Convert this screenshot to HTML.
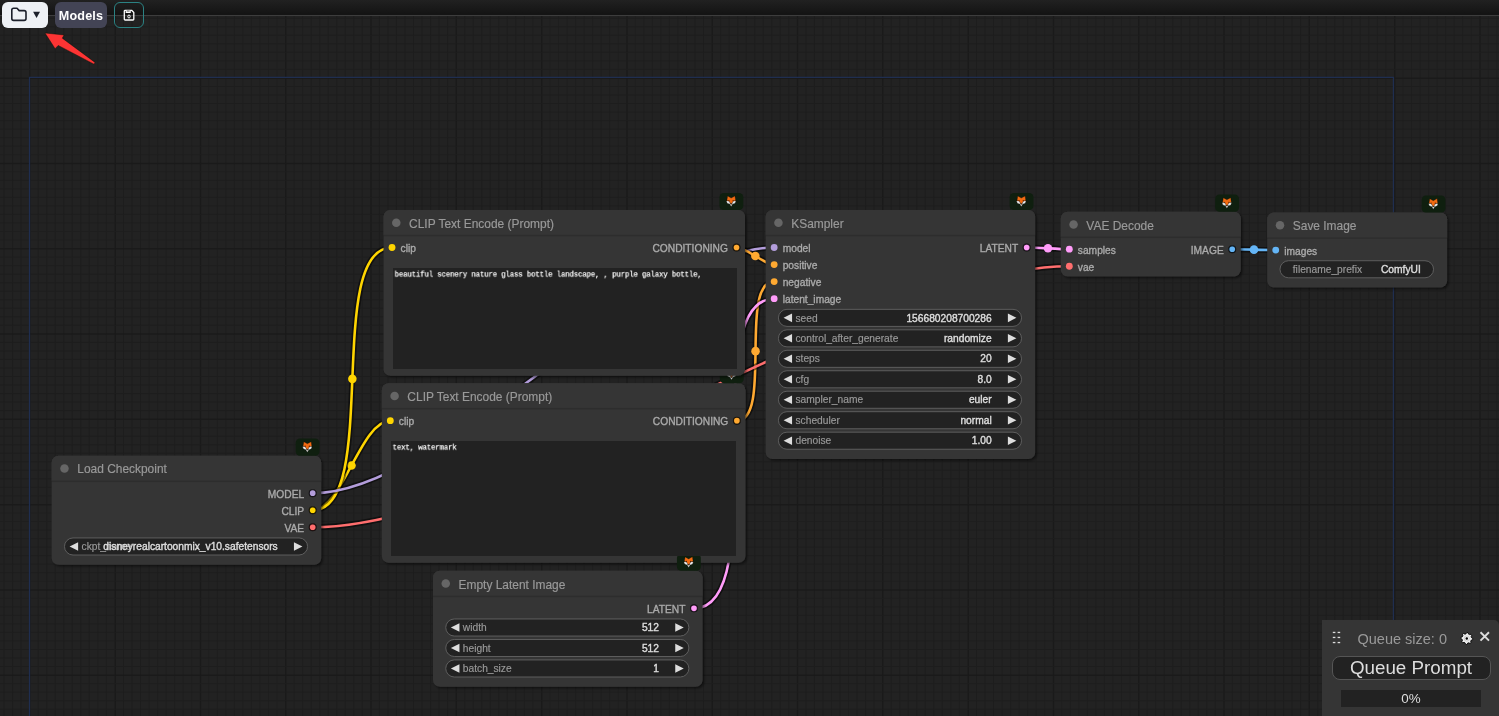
<!DOCTYPE html><html><head><meta charset="utf-8"><style>
*{margin:0;padding:0;box-sizing:border-box}
html,body{width:1499px;height:716px;overflow:hidden;background:#222;font-family:"Liberation Sans",sans-serif}
#cv{position:absolute;left:0;top:0;will-change:transform}
.tt{font-family:"Liberation Sans",sans-serif;font-size:14px;fill:#999;stroke:#999;stroke-width:0.2}
.sl{font-family:"Liberation Sans",sans-serif;font-size:12px;fill:#AAA;stroke:#AAA;stroke-width:0.4}
.wl{font-family:"Liberation Sans",sans-serif;font-size:12px;fill:#999;stroke:#999;stroke-width:0.2}
.wv{font-family:"Liberation Sans",sans-serif;font-size:12px;fill:#DDD;stroke:#DDD;stroke-width:0.45}
.ta{will-change:transform;position:absolute;transform-origin:0 0;transform:scale(0.853);background:#222;color:#ddd;padding:2px;overflow:hidden}
.tx{font-family:"Liberation Mono",monospace;font-size:8.8px;line-height:12px;padding-top:0.32px;color:#fff;white-space:pre-wrap;transform:scaleX(0.947);transform-origin:0 0;width:105.6%;-webkit-text-stroke:0.25px #fff}
#topbar{position:absolute;left:0;top:0;width:1499px;height:16px;background:linear-gradient(#212121,#141414 90%);border-bottom:1px solid #0c0c0c}
#topline{position:absolute;left:0;top:15px;width:1499px;height:1px;background:#3d3d3d}
.btn{position:absolute;top:2px;height:26px;border-radius:6px}
#bfold{left:2px;width:46px;background:#eef1f5}
#bmod{will-change:transform;left:55px;width:52px;background:#434455;color:#fff;font-weight:bold;font-size:12.6px;letter-spacing:0.15px;line-height:28px;text-align:center}
#bsave{left:114px;width:30px;border:1.3px solid #2b8283;background:transparent}
#qp{will-change:transform;position:absolute;left:1322px;top:620px;width:177px;height:96px;background:#353535;border-top-right-radius:5px}
#qs{position:absolute;left:35.5px;top:11px;font-size:14.5px;color:#999}
#qbtn{position:absolute;left:9.5px;top:35.5px;width:159px;height:24.5px;border:1px solid #555;border-radius:8px;background:#222;color:#ddd;font-size:18.8px;text-align:center;line-height:21px}
#qbar{position:absolute;left:19px;top:70px;width:140px;height:17px;background:#222;color:#ddd;font-size:13.4px;text-align:center;line-height:17px}
</style></head><body><svg id="cv" width="1499" height="716" viewBox="0 0 1499 716"><defs><filter id="sh" x="-10%" y="-10%" width="120%" height="130%"><feDropShadow dx="2" dy="2" stdDeviation="1.5" flood-color="#000" flood-opacity="0.5"/></filter></defs><rect width="1499" height="716" fill="#222"/><rect x="3.61" y="0" width="0.9" height="716" fill="#1e1e1e"/><rect x="12.14" y="0" width="0.9" height="716" fill="#1e1e1e"/><rect x="20.67" y="0" width="0.9" height="716" fill="#1e1e1e"/><rect x="29.20" y="0" width="1.3" height="716" fill="#1a1a1a"/><rect x="37.73" y="0" width="0.9" height="716" fill="#1e1e1e"/><rect x="46.26" y="0" width="0.9" height="716" fill="#1e1e1e"/><rect x="54.79" y="0" width="0.9" height="716" fill="#1e1e1e"/><rect x="63.32" y="0" width="0.9" height="716" fill="#1e1e1e"/><rect x="71.85" y="0" width="0.9" height="716" fill="#1e1e1e"/><rect x="80.38" y="0" width="0.9" height="716" fill="#1e1e1e"/><rect x="88.91" y="0" width="0.9" height="716" fill="#1e1e1e"/><rect x="97.44" y="0" width="0.9" height="716" fill="#1e1e1e"/><rect x="105.97" y="0" width="0.9" height="716" fill="#1e1e1e"/><rect x="114.50" y="0" width="1.3" height="716" fill="#1a1a1a"/><rect x="123.03" y="0" width="0.9" height="716" fill="#1e1e1e"/><rect x="131.56" y="0" width="0.9" height="716" fill="#1e1e1e"/><rect x="140.09" y="0" width="0.9" height="716" fill="#1e1e1e"/><rect x="148.62" y="0" width="0.9" height="716" fill="#1e1e1e"/><rect x="157.15" y="0" width="0.9" height="716" fill="#1e1e1e"/><rect x="165.68" y="0" width="0.9" height="716" fill="#1e1e1e"/><rect x="174.21" y="0" width="0.9" height="716" fill="#1e1e1e"/><rect x="182.74" y="0" width="0.9" height="716" fill="#1e1e1e"/><rect x="191.27" y="0" width="0.9" height="716" fill="#1e1e1e"/><rect x="199.80" y="0" width="1.3" height="716" fill="#1a1a1a"/><rect x="208.33" y="0" width="0.9" height="716" fill="#1e1e1e"/><rect x="216.86" y="0" width="0.9" height="716" fill="#1e1e1e"/><rect x="225.39" y="0" width="0.9" height="716" fill="#1e1e1e"/><rect x="233.92" y="0" width="0.9" height="716" fill="#1e1e1e"/><rect x="242.45" y="0" width="0.9" height="716" fill="#1e1e1e"/><rect x="250.98" y="0" width="0.9" height="716" fill="#1e1e1e"/><rect x="259.51" y="0" width="0.9" height="716" fill="#1e1e1e"/><rect x="268.04" y="0" width="0.9" height="716" fill="#1e1e1e"/><rect x="276.57" y="0" width="0.9" height="716" fill="#1e1e1e"/><rect x="285.10" y="0" width="1.3" height="716" fill="#1a1a1a"/><rect x="293.63" y="0" width="0.9" height="716" fill="#1e1e1e"/><rect x="302.16" y="0" width="0.9" height="716" fill="#1e1e1e"/><rect x="310.69" y="0" width="0.9" height="716" fill="#1e1e1e"/><rect x="319.22" y="0" width="0.9" height="716" fill="#1e1e1e"/><rect x="327.75" y="0" width="0.9" height="716" fill="#1e1e1e"/><rect x="336.28" y="0" width="0.9" height="716" fill="#1e1e1e"/><rect x="344.81" y="0" width="0.9" height="716" fill="#1e1e1e"/><rect x="353.34" y="0" width="0.9" height="716" fill="#1e1e1e"/><rect x="361.87" y="0" width="0.9" height="716" fill="#1e1e1e"/><rect x="370.40" y="0" width="1.3" height="716" fill="#1a1a1a"/><rect x="378.93" y="0" width="0.9" height="716" fill="#1e1e1e"/><rect x="387.46" y="0" width="0.9" height="716" fill="#1e1e1e"/><rect x="395.99" y="0" width="0.9" height="716" fill="#1e1e1e"/><rect x="404.52" y="0" width="0.9" height="716" fill="#1e1e1e"/><rect x="413.05" y="0" width="0.9" height="716" fill="#1e1e1e"/><rect x="421.58" y="0" width="0.9" height="716" fill="#1e1e1e"/><rect x="430.11" y="0" width="0.9" height="716" fill="#1e1e1e"/><rect x="438.64" y="0" width="0.9" height="716" fill="#1e1e1e"/><rect x="447.17" y="0" width="0.9" height="716" fill="#1e1e1e"/><rect x="455.70" y="0" width="1.3" height="716" fill="#1a1a1a"/><rect x="464.23" y="0" width="0.9" height="716" fill="#1e1e1e"/><rect x="472.76" y="0" width="0.9" height="716" fill="#1e1e1e"/><rect x="481.29" y="0" width="0.9" height="716" fill="#1e1e1e"/><rect x="489.82" y="0" width="0.9" height="716" fill="#1e1e1e"/><rect x="498.35" y="0" width="0.9" height="716" fill="#1e1e1e"/><rect x="506.88" y="0" width="0.9" height="716" fill="#1e1e1e"/><rect x="515.41" y="0" width="0.9" height="716" fill="#1e1e1e"/><rect x="523.94" y="0" width="0.9" height="716" fill="#1e1e1e"/><rect x="532.47" y="0" width="0.9" height="716" fill="#1e1e1e"/><rect x="541.00" y="0" width="1.3" height="716" fill="#1a1a1a"/><rect x="549.53" y="0" width="0.9" height="716" fill="#1e1e1e"/><rect x="558.06" y="0" width="0.9" height="716" fill="#1e1e1e"/><rect x="566.59" y="0" width="0.9" height="716" fill="#1e1e1e"/><rect x="575.12" y="0" width="0.9" height="716" fill="#1e1e1e"/><rect x="583.65" y="0" width="0.9" height="716" fill="#1e1e1e"/><rect x="592.18" y="0" width="0.9" height="716" fill="#1e1e1e"/><rect x="600.71" y="0" width="0.9" height="716" fill="#1e1e1e"/><rect x="609.24" y="0" width="0.9" height="716" fill="#1e1e1e"/><rect x="617.77" y="0" width="0.9" height="716" fill="#1e1e1e"/><rect x="626.30" y="0" width="1.3" height="716" fill="#1a1a1a"/><rect x="634.83" y="0" width="0.9" height="716" fill="#1e1e1e"/><rect x="643.36" y="0" width="0.9" height="716" fill="#1e1e1e"/><rect x="651.89" y="0" width="0.9" height="716" fill="#1e1e1e"/><rect x="660.42" y="0" width="0.9" height="716" fill="#1e1e1e"/><rect x="668.95" y="0" width="0.9" height="716" fill="#1e1e1e"/><rect x="677.48" y="0" width="0.9" height="716" fill="#1e1e1e"/><rect x="686.01" y="0" width="0.9" height="716" fill="#1e1e1e"/><rect x="694.54" y="0" width="0.9" height="716" fill="#1e1e1e"/><rect x="703.07" y="0" width="0.9" height="716" fill="#1e1e1e"/><rect x="711.60" y="0" width="1.3" height="716" fill="#1a1a1a"/><rect x="720.13" y="0" width="0.9" height="716" fill="#1e1e1e"/><rect x="728.66" y="0" width="0.9" height="716" fill="#1e1e1e"/><rect x="737.19" y="0" width="0.9" height="716" fill="#1e1e1e"/><rect x="745.72" y="0" width="0.9" height="716" fill="#1e1e1e"/><rect x="754.25" y="0" width="0.9" height="716" fill="#1e1e1e"/><rect x="762.78" y="0" width="0.9" height="716" fill="#1e1e1e"/><rect x="771.31" y="0" width="0.9" height="716" fill="#1e1e1e"/><rect x="779.84" y="0" width="0.9" height="716" fill="#1e1e1e"/><rect x="788.37" y="0" width="0.9" height="716" fill="#1e1e1e"/><rect x="796.90" y="0" width="1.3" height="716" fill="#1a1a1a"/><rect x="805.43" y="0" width="0.9" height="716" fill="#1e1e1e"/><rect x="813.96" y="0" width="0.9" height="716" fill="#1e1e1e"/><rect x="822.49" y="0" width="0.9" height="716" fill="#1e1e1e"/><rect x="831.02" y="0" width="0.9" height="716" fill="#1e1e1e"/><rect x="839.55" y="0" width="0.9" height="716" fill="#1e1e1e"/><rect x="848.08" y="0" width="0.9" height="716" fill="#1e1e1e"/><rect x="856.61" y="0" width="0.9" height="716" fill="#1e1e1e"/><rect x="865.14" y="0" width="0.9" height="716" fill="#1e1e1e"/><rect x="873.67" y="0" width="0.9" height="716" fill="#1e1e1e"/><rect x="882.20" y="0" width="1.3" height="716" fill="#1a1a1a"/><rect x="890.73" y="0" width="0.9" height="716" fill="#1e1e1e"/><rect x="899.26" y="0" width="0.9" height="716" fill="#1e1e1e"/><rect x="907.79" y="0" width="0.9" height="716" fill="#1e1e1e"/><rect x="916.32" y="0" width="0.9" height="716" fill="#1e1e1e"/><rect x="924.85" y="0" width="0.9" height="716" fill="#1e1e1e"/><rect x="933.38" y="0" width="0.9" height="716" fill="#1e1e1e"/><rect x="941.91" y="0" width="0.9" height="716" fill="#1e1e1e"/><rect x="950.44" y="0" width="0.9" height="716" fill="#1e1e1e"/><rect x="958.97" y="0" width="0.9" height="716" fill="#1e1e1e"/><rect x="967.50" y="0" width="1.3" height="716" fill="#1a1a1a"/><rect x="976.03" y="0" width="0.9" height="716" fill="#1e1e1e"/><rect x="984.56" y="0" width="0.9" height="716" fill="#1e1e1e"/><rect x="993.09" y="0" width="0.9" height="716" fill="#1e1e1e"/><rect x="1001.62" y="0" width="0.9" height="716" fill="#1e1e1e"/><rect x="1010.15" y="0" width="0.9" height="716" fill="#1e1e1e"/><rect x="1018.68" y="0" width="0.9" height="716" fill="#1e1e1e"/><rect x="1027.21" y="0" width="0.9" height="716" fill="#1e1e1e"/><rect x="1035.74" y="0" width="0.9" height="716" fill="#1e1e1e"/><rect x="1044.27" y="0" width="0.9" height="716" fill="#1e1e1e"/><rect x="1052.80" y="0" width="1.3" height="716" fill="#1a1a1a"/><rect x="1061.33" y="0" width="0.9" height="716" fill="#1e1e1e"/><rect x="1069.86" y="0" width="0.9" height="716" fill="#1e1e1e"/><rect x="1078.39" y="0" width="0.9" height="716" fill="#1e1e1e"/><rect x="1086.92" y="0" width="0.9" height="716" fill="#1e1e1e"/><rect x="1095.45" y="0" width="0.9" height="716" fill="#1e1e1e"/><rect x="1103.98" y="0" width="0.9" height="716" fill="#1e1e1e"/><rect x="1112.51" y="0" width="0.9" height="716" fill="#1e1e1e"/><rect x="1121.04" y="0" width="0.9" height="716" fill="#1e1e1e"/><rect x="1129.57" y="0" width="0.9" height="716" fill="#1e1e1e"/><rect x="1138.10" y="0" width="1.3" height="716" fill="#1a1a1a"/><rect x="1146.63" y="0" width="0.9" height="716" fill="#1e1e1e"/><rect x="1155.16" y="0" width="0.9" height="716" fill="#1e1e1e"/><rect x="1163.69" y="0" width="0.9" height="716" fill="#1e1e1e"/><rect x="1172.22" y="0" width="0.9" height="716" fill="#1e1e1e"/><rect x="1180.75" y="0" width="0.9" height="716" fill="#1e1e1e"/><rect x="1189.28" y="0" width="0.9" height="716" fill="#1e1e1e"/><rect x="1197.81" y="0" width="0.9" height="716" fill="#1e1e1e"/><rect x="1206.34" y="0" width="0.9" height="716" fill="#1e1e1e"/><rect x="1214.87" y="0" width="0.9" height="716" fill="#1e1e1e"/><rect x="1223.40" y="0" width="1.3" height="716" fill="#1a1a1a"/><rect x="1231.93" y="0" width="0.9" height="716" fill="#1e1e1e"/><rect x="1240.46" y="0" width="0.9" height="716" fill="#1e1e1e"/><rect x="1248.99" y="0" width="0.9" height="716" fill="#1e1e1e"/><rect x="1257.52" y="0" width="0.9" height="716" fill="#1e1e1e"/><rect x="1266.05" y="0" width="0.9" height="716" fill="#1e1e1e"/><rect x="1274.58" y="0" width="0.9" height="716" fill="#1e1e1e"/><rect x="1283.11" y="0" width="0.9" height="716" fill="#1e1e1e"/><rect x="1291.64" y="0" width="0.9" height="716" fill="#1e1e1e"/><rect x="1300.17" y="0" width="0.9" height="716" fill="#1e1e1e"/><rect x="1308.70" y="0" width="1.3" height="716" fill="#1a1a1a"/><rect x="1317.23" y="0" width="0.9" height="716" fill="#1e1e1e"/><rect x="1325.76" y="0" width="0.9" height="716" fill="#1e1e1e"/><rect x="1334.29" y="0" width="0.9" height="716" fill="#1e1e1e"/><rect x="1342.82" y="0" width="0.9" height="716" fill="#1e1e1e"/><rect x="1351.35" y="0" width="0.9" height="716" fill="#1e1e1e"/><rect x="1359.88" y="0" width="0.9" height="716" fill="#1e1e1e"/><rect x="1368.41" y="0" width="0.9" height="716" fill="#1e1e1e"/><rect x="1376.94" y="0" width="0.9" height="716" fill="#1e1e1e"/><rect x="1385.47" y="0" width="0.9" height="716" fill="#1e1e1e"/><rect x="1394.00" y="0" width="1.3" height="716" fill="#1a1a1a"/><rect x="1402.53" y="0" width="0.9" height="716" fill="#1e1e1e"/><rect x="1411.06" y="0" width="0.9" height="716" fill="#1e1e1e"/><rect x="1419.59" y="0" width="0.9" height="716" fill="#1e1e1e"/><rect x="1428.12" y="0" width="0.9" height="716" fill="#1e1e1e"/><rect x="1436.65" y="0" width="0.9" height="716" fill="#1e1e1e"/><rect x="1445.18" y="0" width="0.9" height="716" fill="#1e1e1e"/><rect x="1453.71" y="0" width="0.9" height="716" fill="#1e1e1e"/><rect x="1462.24" y="0" width="0.9" height="716" fill="#1e1e1e"/><rect x="1470.77" y="0" width="0.9" height="716" fill="#1e1e1e"/><rect x="1479.30" y="0" width="1.3" height="716" fill="#1a1a1a"/><rect x="1487.83" y="0" width="0.9" height="716" fill="#1e1e1e"/><rect x="1496.36" y="0" width="0.9" height="716" fill="#1e1e1e"/><rect x="0" y="0.73" width="1499" height="0.9" fill="#1e1e1e"/><rect x="0" y="9.26" width="1499" height="0.9" fill="#1e1e1e"/><rect x="0" y="17.79" width="1499" height="0.9" fill="#1e1e1e"/><rect x="0" y="26.32" width="1499" height="0.9" fill="#1e1e1e"/><rect x="0" y="34.85" width="1499" height="0.9" fill="#1e1e1e"/><rect x="0" y="43.38" width="1499" height="0.9" fill="#1e1e1e"/><rect x="0" y="51.91" width="1499" height="0.9" fill="#1e1e1e"/><rect x="0" y="60.44" width="1499" height="0.9" fill="#1e1e1e"/><rect x="0" y="68.97" width="1499" height="0.9" fill="#1e1e1e"/><rect x="0" y="77.50" width="1499" height="1.3" fill="#1a1a1a"/><rect x="0" y="86.03" width="1499" height="0.9" fill="#1e1e1e"/><rect x="0" y="94.56" width="1499" height="0.9" fill="#1e1e1e"/><rect x="0" y="103.09" width="1499" height="0.9" fill="#1e1e1e"/><rect x="0" y="111.62" width="1499" height="0.9" fill="#1e1e1e"/><rect x="0" y="120.15" width="1499" height="0.9" fill="#1e1e1e"/><rect x="0" y="128.68" width="1499" height="0.9" fill="#1e1e1e"/><rect x="0" y="137.21" width="1499" height="0.9" fill="#1e1e1e"/><rect x="0" y="145.74" width="1499" height="0.9" fill="#1e1e1e"/><rect x="0" y="154.27" width="1499" height="0.9" fill="#1e1e1e"/><rect x="0" y="162.80" width="1499" height="1.3" fill="#1a1a1a"/><rect x="0" y="171.33" width="1499" height="0.9" fill="#1e1e1e"/><rect x="0" y="179.86" width="1499" height="0.9" fill="#1e1e1e"/><rect x="0" y="188.39" width="1499" height="0.9" fill="#1e1e1e"/><rect x="0" y="196.92" width="1499" height="0.9" fill="#1e1e1e"/><rect x="0" y="205.45" width="1499" height="0.9" fill="#1e1e1e"/><rect x="0" y="213.98" width="1499" height="0.9" fill="#1e1e1e"/><rect x="0" y="222.51" width="1499" height="0.9" fill="#1e1e1e"/><rect x="0" y="231.04" width="1499" height="0.9" fill="#1e1e1e"/><rect x="0" y="239.57" width="1499" height="0.9" fill="#1e1e1e"/><rect x="0" y="248.10" width="1499" height="1.3" fill="#1a1a1a"/><rect x="0" y="256.63" width="1499" height="0.9" fill="#1e1e1e"/><rect x="0" y="265.16" width="1499" height="0.9" fill="#1e1e1e"/><rect x="0" y="273.69" width="1499" height="0.9" fill="#1e1e1e"/><rect x="0" y="282.22" width="1499" height="0.9" fill="#1e1e1e"/><rect x="0" y="290.75" width="1499" height="0.9" fill="#1e1e1e"/><rect x="0" y="299.28" width="1499" height="0.9" fill="#1e1e1e"/><rect x="0" y="307.81" width="1499" height="0.9" fill="#1e1e1e"/><rect x="0" y="316.34" width="1499" height="0.9" fill="#1e1e1e"/><rect x="0" y="324.87" width="1499" height="0.9" fill="#1e1e1e"/><rect x="0" y="333.40" width="1499" height="1.3" fill="#1a1a1a"/><rect x="0" y="341.93" width="1499" height="0.9" fill="#1e1e1e"/><rect x="0" y="350.46" width="1499" height="0.9" fill="#1e1e1e"/><rect x="0" y="358.99" width="1499" height="0.9" fill="#1e1e1e"/><rect x="0" y="367.52" width="1499" height="0.9" fill="#1e1e1e"/><rect x="0" y="376.05" width="1499" height="0.9" fill="#1e1e1e"/><rect x="0" y="384.58" width="1499" height="0.9" fill="#1e1e1e"/><rect x="0" y="393.11" width="1499" height="0.9" fill="#1e1e1e"/><rect x="0" y="401.64" width="1499" height="0.9" fill="#1e1e1e"/><rect x="0" y="410.17" width="1499" height="0.9" fill="#1e1e1e"/><rect x="0" y="418.70" width="1499" height="1.3" fill="#1a1a1a"/><rect x="0" y="427.23" width="1499" height="0.9" fill="#1e1e1e"/><rect x="0" y="435.76" width="1499" height="0.9" fill="#1e1e1e"/><rect x="0" y="444.29" width="1499" height="0.9" fill="#1e1e1e"/><rect x="0" y="452.82" width="1499" height="0.9" fill="#1e1e1e"/><rect x="0" y="461.35" width="1499" height="0.9" fill="#1e1e1e"/><rect x="0" y="469.88" width="1499" height="0.9" fill="#1e1e1e"/><rect x="0" y="478.41" width="1499" height="0.9" fill="#1e1e1e"/><rect x="0" y="486.94" width="1499" height="0.9" fill="#1e1e1e"/><rect x="0" y="495.47" width="1499" height="0.9" fill="#1e1e1e"/><rect x="0" y="504.00" width="1499" height="1.3" fill="#1a1a1a"/><rect x="0" y="512.53" width="1499" height="0.9" fill="#1e1e1e"/><rect x="0" y="521.06" width="1499" height="0.9" fill="#1e1e1e"/><rect x="0" y="529.59" width="1499" height="0.9" fill="#1e1e1e"/><rect x="0" y="538.12" width="1499" height="0.9" fill="#1e1e1e"/><rect x="0" y="546.65" width="1499" height="0.9" fill="#1e1e1e"/><rect x="0" y="555.18" width="1499" height="0.9" fill="#1e1e1e"/><rect x="0" y="563.71" width="1499" height="0.9" fill="#1e1e1e"/><rect x="0" y="572.24" width="1499" height="0.9" fill="#1e1e1e"/><rect x="0" y="580.77" width="1499" height="0.9" fill="#1e1e1e"/><rect x="0" y="589.30" width="1499" height="1.3" fill="#1a1a1a"/><rect x="0" y="597.83" width="1499" height="0.9" fill="#1e1e1e"/><rect x="0" y="606.36" width="1499" height="0.9" fill="#1e1e1e"/><rect x="0" y="614.89" width="1499" height="0.9" fill="#1e1e1e"/><rect x="0" y="623.42" width="1499" height="0.9" fill="#1e1e1e"/><rect x="0" y="631.95" width="1499" height="0.9" fill="#1e1e1e"/><rect x="0" y="640.48" width="1499" height="0.9" fill="#1e1e1e"/><rect x="0" y="649.01" width="1499" height="0.9" fill="#1e1e1e"/><rect x="0" y="657.54" width="1499" height="0.9" fill="#1e1e1e"/><rect x="0" y="666.07" width="1499" height="0.9" fill="#1e1e1e"/><rect x="0" y="674.60" width="1499" height="1.3" fill="#1a1a1a"/><rect x="0" y="683.13" width="1499" height="0.9" fill="#1e1e1e"/><rect x="0" y="691.66" width="1499" height="0.9" fill="#1e1e1e"/><rect x="0" y="700.19" width="1499" height="0.9" fill="#1e1e1e"/><rect x="0" y="708.72" width="1499" height="0.9" fill="#1e1e1e"/><path d="M29.5,716 V77.45 H1393.45 V716" fill="none" stroke="#1f2e50" stroke-width="1.25"/><g transform="translate(29.5,76.9) scale(0.853)"><path d="M332.00,508.00 C366.74,508.00 388.26,403.00 423.00,403.00" fill="none" stroke="rgba(0,0,0,0.5)" stroke-width="7" stroke-linecap="round"/><path d="M332.00,508.00 C366.74,508.00 388.26,403.00 423.00,403.00" fill="none" stroke="#FFD500" stroke-width="3"/><circle cx="377.50" cy="455.50" r="5" fill="#FFD500"/><path d="M332.00,508.00 C412.43,508.00 344.57,200.00 425.00,200.00" fill="none" stroke="rgba(0,0,0,0.5)" stroke-width="7" stroke-linecap="round"/><path d="M332.00,508.00 C412.43,508.00 344.57,200.00 425.00,200.00" fill="none" stroke="#FFD500" stroke-width="3"/><circle cx="378.50" cy="354.00" r="5" fill="#FFD500"/><path d="M332.00,488.00 C485.22,488.00 719.78,200.00 873.00,200.00" fill="none" stroke="rgba(0,0,0,0.5)" stroke-width="7" stroke-linecap="round"/><path d="M332.00,488.00 C485.22,488.00 719.78,200.00 873.00,200.00" fill="none" stroke="#B39DDB" stroke-width="3"/><circle cx="602.50" cy="344.00" r="5" fill="#B39DDB"/><path d="M828.85,200.00 C840.97,200.00 860.88,220.00 873.00,220.00" fill="none" stroke="rgba(0,0,0,0.5)" stroke-width="7" stroke-linecap="round"/><path d="M828.85,200.00 C840.97,200.00 860.88,220.00 873.00,220.00" fill="none" stroke="#FFA931" stroke-width="3"/><circle cx="850.92" cy="210.00" r="5" fill="#FFA931"/><path d="M829.28,403.00 C871.47,403.00 830.81,240.00 873.00,240.00" fill="none" stroke="rgba(0,0,0,0.5)" stroke-width="7" stroke-linecap="round"/><path d="M829.28,403.00 C871.47,403.00 830.81,240.00 873.00,240.00" fill="none" stroke="#FFA931" stroke-width="3"/><circle cx="851.14" cy="321.50" r="5" fill="#FFA931"/><path d="M779.00,623.00 C872.74,623.00 779.26,260.00 873.00,260.00" fill="none" stroke="rgba(0,0,0,0.5)" stroke-width="7" stroke-linecap="round"/><path d="M779.00,623.00 C872.74,623.00 779.26,260.00 873.00,260.00" fill="none" stroke="#FF9CF9" stroke-width="3"/><circle cx="826.00" cy="441.50" r="5" fill="#FF9CF9"/><path d="M1169.00,200.00 C1181.51,200.00 1206.49,202.00 1219.00,202.00" fill="none" stroke="rgba(0,0,0,0.5)" stroke-width="7" stroke-linecap="round"/><path d="M1169.00,200.00 C1181.51,200.00 1206.49,202.00 1219.00,202.00" fill="none" stroke="#FF9CF9" stroke-width="3"/><circle cx="1194.00" cy="201.00" r="5" fill="#FF9CF9"/><path d="M332.00,528.00 C566.57,528.00 984.43,222.00 1219.00,222.00" fill="none" stroke="rgba(0,0,0,0.5)" stroke-width="7" stroke-linecap="round"/><path d="M332.00,528.00 C566.57,528.00 984.43,222.00 1219.00,222.00" fill="none" stroke="#FF6E6E" stroke-width="3"/><circle cx="775.50" cy="375.00" r="5" fill="#FF6E6E"/><path d="M1410.00,202.00 C1422.75,202.00 1448.25,203.00 1461.00,203.00" fill="none" stroke="rgba(0,0,0,0.5)" stroke-width="7" stroke-linecap="round"/><path d="M1410.00,202.00 C1422.75,202.00 1448.25,203.00 1461.00,203.00" fill="none" stroke="#64B5F6" stroke-width="3"/><circle cx="1435.50" cy="202.50" r="5" fill="#64B5F6"/><g transform="translate(413,389)"><rect x="0" y="-30" width="426.28" height="210.61" rx="8" ry="8" fill="#353535" filter="url(#sh)"/><path d="M0,0 V-22 A8,8 0 0 1 8,-30 H418.28 A8,8 0 0 1 426.28,-22 V0 Z" fill="#353535"/><rect x="0" y="-1" width="426.28" height="2" fill="rgba(0,0,0,0.12)"/><circle cx="15" cy="-15" r="5" fill="#666"/><text x="30" y="-9.1" class="tt">CLIP Text Encode (Prompt)</text><circle cx="10" cy="14" r="4" fill="#FFD500"/><text x="20" y="19" class="sl" dy="0.5">clip</text><circle cx="416.28" cy="14" r="4" fill="#FFA931" stroke="#000" stroke-opacity="0.8" stroke-width="1.4"/><text x="406.28" y="19" class="sl" dy="0.5" text-anchor="end">CONDITIONING</text><g transform="translate(396.28,-50)"><rect x="0" y="0" width="28" height="20" rx="5" ry="5" fill="#0F1F0F"/><g transform="scale(1.1723)"><polygon points="8.2,3.2 11.7,5.2 15.5,3.1 16.2,7.8 14.2,8.1 11.7,11.4 9.2,8.1 7.4,7.8" fill="#F26B12" stroke="#000" stroke-width="0.35" stroke-opacity="0.7"/><polygon points="6.9,8.2 9.2,8.0 11.1,10.6 10.0,11.2 7.8,10.3" fill="#EDEDED" stroke="#000" stroke-width="0.3" stroke-opacity="0.6"/><polygon points="16.4,8.2 14.2,8.0 12.3,10.6 13.4,11.2 15.6,10.3" fill="#EDEDED" stroke="#000" stroke-width="0.3" stroke-opacity="0.6"/><polygon points="10.0,10.9 11.7,11.3 13.4,10.9 11.7,13.7" fill="#E6E6E6" stroke="#000" stroke-width="0.3" stroke-opacity="0.6"/><circle cx="9.5" cy="7.7" r="0.65" fill="#5a1e00"/><circle cx="13.7" cy="7.7" r="0.65" fill="#5a1e00"/><circle cx="11.7" cy="11.1" r="0.5" fill="#3a1a00"/></g></g></g><g transform="translate(415,186)"><rect x="0" y="-30" width="423.85" height="194.31" rx="8" ry="8" fill="#353535" filter="url(#sh)"/><path d="M0,0 V-22 A8,8 0 0 1 8,-30 H415.85 A8,8 0 0 1 423.85,-22 V0 Z" fill="#353535"/><rect x="0" y="-1" width="423.85" height="2" fill="rgba(0,0,0,0.12)"/><circle cx="15" cy="-15" r="5" fill="#666"/><text x="30" y="-9.1" class="tt">CLIP Text Encode (Prompt)</text><circle cx="10" cy="14" r="4" fill="#FFD500"/><text x="20" y="19" class="sl" dy="0.5">clip</text><circle cx="413.85" cy="14" r="4" fill="#FFA931" stroke="#000" stroke-opacity="0.8" stroke-width="1.4"/><text x="403.85" y="19" class="sl" dy="0.5" text-anchor="end">CONDITIONING</text><g transform="translate(393.85,-50)"><rect x="0" y="0" width="28" height="20" rx="5" ry="5" fill="#0F1F0F"/><g transform="scale(1.1723)"><polygon points="8.2,3.2 11.7,5.2 15.5,3.1 16.2,7.8 14.2,8.1 11.7,11.4 9.2,8.1 7.4,7.8" fill="#F26B12" stroke="#000" stroke-width="0.35" stroke-opacity="0.7"/><polygon points="6.9,8.2 9.2,8.0 11.1,10.6 10.0,11.2 7.8,10.3" fill="#EDEDED" stroke="#000" stroke-width="0.3" stroke-opacity="0.6"/><polygon points="16.4,8.2 14.2,8.0 12.3,10.6 13.4,11.2 15.6,10.3" fill="#EDEDED" stroke="#000" stroke-width="0.3" stroke-opacity="0.6"/><polygon points="10.0,10.9 11.7,11.3 13.4,10.9 11.7,13.7" fill="#E6E6E6" stroke="#000" stroke-width="0.3" stroke-opacity="0.6"/><circle cx="9.5" cy="7.7" r="0.65" fill="#5a1e00"/><circle cx="13.7" cy="7.7" r="0.65" fill="#5a1e00"/><circle cx="11.7" cy="11.1" r="0.5" fill="#3a1a00"/></g></g></g><g transform="translate(473,609)"><rect x="0" y="-30" width="316.00" height="136.00" rx="8" ry="8" fill="#353535" filter="url(#sh)"/><path d="M0,0 V-22 A8,8 0 0 1 8,-30 H308.00 A8,8 0 0 1 316.00,-22 V0 Z" fill="#353535"/><rect x="0" y="-1" width="316.00" height="2" fill="rgba(0,0,0,0.12)"/><circle cx="15" cy="-15" r="5" fill="#666"/><text x="30" y="-9.1" class="tt">Empty Latent Image</text><circle cx="306.00" cy="14" r="4" fill="#FF9CF9" stroke="#000" stroke-opacity="0.8" stroke-width="1.4"/><text x="296.00" y="19" class="sl" dy="0.5" text-anchor="end">LATENT</text><rect x="15" y="26.5" width="285.00" height="20" rx="10" ry="10" fill="#222" stroke="#666" stroke-width="1"/><polygon points="31,31.5 21,36.5 31,41.5" fill="#DDD"/><polygon points="284.00,31.5 294.00,36.5 284.00,41.5" fill="#DDD"/><text x="35" y="40.5" class="wl" dy="0.3">width</text><text x="265.00" y="40.5" class="wv" dy="0.3" text-anchor="end">512</text><rect x="15" y="50.5" width="285.00" height="20" rx="10" ry="10" fill="#222" stroke="#666" stroke-width="1"/><polygon points="31,55.5 21,60.5 31,65.5" fill="#DDD"/><polygon points="284.00,55.5 294.00,60.5 284.00,65.5" fill="#DDD"/><text x="35" y="64.5" class="wl" dy="0.3">height</text><text x="265.00" y="64.5" class="wv" dy="0.3" text-anchor="end">512</text><rect x="15" y="74.5" width="285.00" height="20" rx="10" ry="10" fill="#222" stroke="#666" stroke-width="1"/><polygon points="31,79.5 21,84.5 31,89.5" fill="#DDD"/><polygon points="284.00,79.5 294.00,84.5 284.00,89.5" fill="#DDD"/><text x="35" y="88.5" class="wl" dy="0.3">batch_size</text><text x="265.00" y="88.5" class="wv" dy="0.3" text-anchor="end">1</text><g transform="translate(286.00,-50)"><rect x="0" y="0" width="28" height="20" rx="5" ry="5" fill="#0F1F0F"/><g transform="scale(1.1723)"><polygon points="8.2,3.2 11.7,5.2 15.5,3.1 16.2,7.8 14.2,8.1 11.7,11.4 9.2,8.1 7.4,7.8" fill="#F26B12" stroke="#000" stroke-width="0.35" stroke-opacity="0.7"/><polygon points="6.9,8.2 9.2,8.0 11.1,10.6 10.0,11.2 7.8,10.3" fill="#EDEDED" stroke="#000" stroke-width="0.3" stroke-opacity="0.6"/><polygon points="16.4,8.2 14.2,8.0 12.3,10.6 13.4,11.2 15.6,10.3" fill="#EDEDED" stroke="#000" stroke-width="0.3" stroke-opacity="0.6"/><polygon points="10.0,10.9 11.7,11.3 13.4,10.9 11.7,13.7" fill="#E6E6E6" stroke="#000" stroke-width="0.3" stroke-opacity="0.6"/><circle cx="9.5" cy="7.7" r="0.65" fill="#5a1e00"/><circle cx="13.7" cy="7.7" r="0.65" fill="#5a1e00"/><circle cx="11.7" cy="11.1" r="0.5" fill="#3a1a00"/></g></g></g><g transform="translate(863,186)"><rect x="0" y="-30" width="316.00" height="292.00" rx="8" ry="8" fill="#353535" filter="url(#sh)"/><path d="M0,0 V-22 A8,8 0 0 1 8,-30 H308.00 A8,8 0 0 1 316.00,-22 V0 Z" fill="#353535"/><rect x="0" y="-1" width="316.00" height="2" fill="rgba(0,0,0,0.12)"/><circle cx="15" cy="-15" r="5" fill="#666"/><text x="30" y="-9.1" class="tt">KSampler</text><circle cx="10" cy="14" r="4" fill="#B39DDB"/><text x="20" y="19" class="sl" dy="0.5">model</text><circle cx="10" cy="34" r="4" fill="#FFA931"/><text x="20" y="39" class="sl" dy="0.5">positive</text><circle cx="10" cy="54" r="4" fill="#FFA931"/><text x="20" y="59" class="sl" dy="0.5">negative</text><circle cx="10" cy="74" r="4" fill="#FF9CF9"/><text x="20" y="79" class="sl" dy="0.5">latent_image</text><circle cx="306.00" cy="14" r="4" fill="#FF9CF9" stroke="#000" stroke-opacity="0.8" stroke-width="1.4"/><text x="296.00" y="19" class="sl" dy="0.5" text-anchor="end">LATENT</text><rect x="15" y="86.5" width="285.00" height="20" rx="10" ry="10" fill="#222" stroke="#666" stroke-width="1"/><polygon points="31,91.5 21,96.5 31,101.5" fill="#DDD"/><polygon points="284.00,91.5 294.00,96.5 284.00,101.5" fill="#DDD"/><text x="35" y="100.5" class="wl" dy="0.3">seed</text><text x="265.00" y="100.5" class="wv" dy="0.3" text-anchor="end">156680208700286</text><rect x="15" y="110.5" width="285.00" height="20" rx="10" ry="10" fill="#222" stroke="#666" stroke-width="1"/><polygon points="31,115.5 21,120.5 31,125.5" fill="#DDD"/><polygon points="284.00,115.5 294.00,120.5 284.00,125.5" fill="#DDD"/><text x="35" y="124.5" class="wl" dy="0.3">control_after_generate</text><text x="265.00" y="124.5" class="wv" dy="0.3" text-anchor="end">randomize</text><rect x="15" y="134.5" width="285.00" height="20" rx="10" ry="10" fill="#222" stroke="#666" stroke-width="1"/><polygon points="31,139.5 21,144.5 31,149.5" fill="#DDD"/><polygon points="284.00,139.5 294.00,144.5 284.00,149.5" fill="#DDD"/><text x="35" y="148.5" class="wl" dy="0.3">steps</text><text x="265.00" y="148.5" class="wv" dy="0.3" text-anchor="end">20</text><rect x="15" y="158.5" width="285.00" height="20" rx="10" ry="10" fill="#222" stroke="#666" stroke-width="1"/><polygon points="31,163.5 21,168.5 31,173.5" fill="#DDD"/><polygon points="284.00,163.5 294.00,168.5 284.00,173.5" fill="#DDD"/><text x="35" y="172.5" class="wl" dy="0.3">cfg</text><text x="265.00" y="172.5" class="wv" dy="0.3" text-anchor="end">8.0</text><rect x="15" y="182.5" width="285.00" height="20" rx="10" ry="10" fill="#222" stroke="#666" stroke-width="1"/><polygon points="31,187.5 21,192.5 31,197.5" fill="#DDD"/><polygon points="284.00,187.5 294.00,192.5 284.00,197.5" fill="#DDD"/><text x="35" y="196.5" class="wl" dy="0.3">sampler_name</text><text x="265.00" y="196.5" class="wv" dy="0.3" text-anchor="end">euler</text><rect x="15" y="206.5" width="285.00" height="20" rx="10" ry="10" fill="#222" stroke="#666" stroke-width="1"/><polygon points="31,211.5 21,216.5 31,221.5" fill="#DDD"/><polygon points="284.00,211.5 294.00,216.5 284.00,221.5" fill="#DDD"/><text x="35" y="220.5" class="wl" dy="0.3">scheduler</text><text x="265.00" y="220.5" class="wv" dy="0.3" text-anchor="end">normal</text><rect x="15" y="230.5" width="285.00" height="20" rx="10" ry="10" fill="#222" stroke="#666" stroke-width="1"/><polygon points="31,235.5 21,240.5 31,245.5" fill="#DDD"/><polygon points="284.00,235.5 294.00,240.5 284.00,245.5" fill="#DDD"/><text x="35" y="244.5" class="wl" dy="0.3">denoise</text><text x="265.00" y="244.5" class="wv" dy="0.3" text-anchor="end">1.00</text><g transform="translate(286.00,-50)"><rect x="0" y="0" width="28" height="20" rx="5" ry="5" fill="#0F1F0F"/><g transform="scale(1.1723)"><polygon points="8.2,3.2 11.7,5.2 15.5,3.1 16.2,7.8 14.2,8.1 11.7,11.4 9.2,8.1 7.4,7.8" fill="#F26B12" stroke="#000" stroke-width="0.35" stroke-opacity="0.7"/><polygon points="6.9,8.2 9.2,8.0 11.1,10.6 10.0,11.2 7.8,10.3" fill="#EDEDED" stroke="#000" stroke-width="0.3" stroke-opacity="0.6"/><polygon points="16.4,8.2 14.2,8.0 12.3,10.6 13.4,11.2 15.6,10.3" fill="#EDEDED" stroke="#000" stroke-width="0.3" stroke-opacity="0.6"/><polygon points="10.0,10.9 11.7,11.3 13.4,10.9 11.7,13.7" fill="#E6E6E6" stroke="#000" stroke-width="0.3" stroke-opacity="0.6"/><circle cx="9.5" cy="7.7" r="0.65" fill="#5a1e00"/><circle cx="13.7" cy="7.7" r="0.65" fill="#5a1e00"/><circle cx="11.7" cy="11.1" r="0.5" fill="#3a1a00"/></g></g></g><g transform="translate(1209,188)"><rect x="0" y="-30" width="211.00" height="76.00" rx="8" ry="8" fill="#353535" filter="url(#sh)"/><path d="M0,0 V-22 A8,8 0 0 1 8,-30 H203.00 A8,8 0 0 1 211.00,-22 V0 Z" fill="#353535"/><rect x="0" y="-1" width="211.00" height="2" fill="rgba(0,0,0,0.12)"/><circle cx="15" cy="-15" r="5" fill="#666"/><text x="30" y="-9.1" class="tt">VAE Decode</text><circle cx="10" cy="14" r="4" fill="#FF9CF9"/><text x="20" y="19" class="sl" dy="0.5">samples</text><circle cx="10" cy="34" r="4" fill="#FF6E6E"/><text x="20" y="39" class="sl" dy="0.5">vae</text><circle cx="201.00" cy="14" r="4" fill="#64B5F6" stroke="#000" stroke-opacity="0.8" stroke-width="1.4"/><text x="191.00" y="19" class="sl" dy="0.5" text-anchor="end">IMAGE</text><g transform="translate(181.00,-50)"><rect x="0" y="0" width="28" height="20" rx="5" ry="5" fill="#0F1F0F"/><g transform="scale(1.1723)"><polygon points="8.2,3.2 11.7,5.2 15.5,3.1 16.2,7.8 14.2,8.1 11.7,11.4 9.2,8.1 7.4,7.8" fill="#F26B12" stroke="#000" stroke-width="0.35" stroke-opacity="0.7"/><polygon points="6.9,8.2 9.2,8.0 11.1,10.6 10.0,11.2 7.8,10.3" fill="#EDEDED" stroke="#000" stroke-width="0.3" stroke-opacity="0.6"/><polygon points="16.4,8.2 14.2,8.0 12.3,10.6 13.4,11.2 15.6,10.3" fill="#EDEDED" stroke="#000" stroke-width="0.3" stroke-opacity="0.6"/><polygon points="10.0,10.9 11.7,11.3 13.4,10.9 11.7,13.7" fill="#E6E6E6" stroke="#000" stroke-width="0.3" stroke-opacity="0.6"/><circle cx="9.5" cy="7.7" r="0.65" fill="#5a1e00"/><circle cx="13.7" cy="7.7" r="0.65" fill="#5a1e00"/><circle cx="11.7" cy="11.1" r="0.5" fill="#3a1a00"/></g></g></g><g transform="translate(1451,189)"><rect x="0" y="-30" width="211.00" height="88.00" rx="8" ry="8" fill="#353535" filter="url(#sh)"/><path d="M0,0 V-22 A8,8 0 0 1 8,-30 H203.00 A8,8 0 0 1 211.00,-22 V0 Z" fill="#353535"/><rect x="0" y="-1" width="211.00" height="2" fill="rgba(0,0,0,0.12)"/><circle cx="15" cy="-15" r="5" fill="#666"/><text x="30" y="-9.1" class="tt">Save Image</text><circle cx="10" cy="14" r="4" fill="#64B5F6"/><text x="20" y="19" class="sl" dy="0.5">images</text><rect x="15" y="26.5" width="180.00" height="20" rx="10" ry="10" fill="#222" stroke="#666" stroke-width="1"/><text x="30" y="40.5" class="wl" dy="0.3">filename_prefix</text><text x="180.00" y="40.5" class="wv" dy="0.3" text-anchor="end">ComfyUI</text><g transform="translate(181.00,-50)"><rect x="0" y="0" width="28" height="20" rx="5" ry="5" fill="#0F1F0F"/><g transform="scale(1.1723)"><polygon points="8.2,3.2 11.7,5.2 15.5,3.1 16.2,7.8 14.2,8.1 11.7,11.4 9.2,8.1 7.4,7.8" fill="#F26B12" stroke="#000" stroke-width="0.35" stroke-opacity="0.7"/><polygon points="6.9,8.2 9.2,8.0 11.1,10.6 10.0,11.2 7.8,10.3" fill="#EDEDED" stroke="#000" stroke-width="0.3" stroke-opacity="0.6"/><polygon points="16.4,8.2 14.2,8.0 12.3,10.6 13.4,11.2 15.6,10.3" fill="#EDEDED" stroke="#000" stroke-width="0.3" stroke-opacity="0.6"/><polygon points="10.0,10.9 11.7,11.3 13.4,10.9 11.7,13.7" fill="#E6E6E6" stroke="#000" stroke-width="0.3" stroke-opacity="0.6"/><circle cx="9.5" cy="7.7" r="0.65" fill="#5a1e00"/><circle cx="13.7" cy="7.7" r="0.65" fill="#5a1e00"/><circle cx="11.7" cy="11.1" r="0.5" fill="#3a1a00"/></g></g></g><g transform="translate(26,474)"><rect x="0" y="-30" width="316.00" height="128.00" rx="8" ry="8" fill="#353535" filter="url(#sh)"/><path d="M0,0 V-22 A8,8 0 0 1 8,-30 H308.00 A8,8 0 0 1 316.00,-22 V0 Z" fill="#353535"/><rect x="0" y="-1" width="316.00" height="2" fill="rgba(0,0,0,0.12)"/><circle cx="15" cy="-15" r="5" fill="#666"/><text x="30" y="-9.1" class="tt">Load Checkpoint</text><circle cx="306.00" cy="14" r="4" fill="#B39DDB" stroke="#000" stroke-opacity="0.8" stroke-width="1.4"/><text x="296.00" y="19" class="sl" dy="0.5" text-anchor="end">MODEL</text><circle cx="306.00" cy="34" r="4" fill="#FFD500" stroke="#000" stroke-opacity="0.8" stroke-width="1.4"/><text x="296.00" y="39" class="sl" dy="0.5" text-anchor="end">CLIP</text><circle cx="306.00" cy="54" r="4" fill="#FF6E6E" stroke="#000" stroke-opacity="0.8" stroke-width="1.4"/><text x="296.00" y="59" class="sl" dy="0.5" text-anchor="end">VAE</text><rect x="15" y="66.5" width="285.00" height="20" rx="10" ry="10" fill="#222" stroke="#666" stroke-width="1"/><polygon points="31,71.5 21,76.5 31,81.5" fill="#DDD"/><polygon points="284.00,71.5 294.00,76.5 284.00,81.5" fill="#DDD"/><text x="35" y="80.5" class="wl" dy="0.3">ckpt_name</text><text x="265.00" y="80.5" class="wv" dy="0.3" text-anchor="end">disneyrealcartoonmix_v10.safetensors</text><g transform="translate(286.00,-50)"><rect x="0" y="0" width="28" height="20" rx="5" ry="5" fill="#0F1F0F"/><g transform="scale(1.1723)"><polygon points="8.2,3.2 11.7,5.2 15.5,3.1 16.2,7.8 14.2,8.1 11.7,11.4 9.2,8.1 7.4,7.8" fill="#F26B12" stroke="#000" stroke-width="0.35" stroke-opacity="0.7"/><polygon points="6.9,8.2 9.2,8.0 11.1,10.6 10.0,11.2 7.8,10.3" fill="#EDEDED" stroke="#000" stroke-width="0.3" stroke-opacity="0.6"/><polygon points="16.4,8.2 14.2,8.0 12.3,10.6 13.4,11.2 15.6,10.3" fill="#EDEDED" stroke="#000" stroke-width="0.3" stroke-opacity="0.6"/><polygon points="10.0,10.9 11.7,11.3 13.4,10.9 11.7,13.7" fill="#E6E6E6" stroke="#000" stroke-width="0.3" stroke-opacity="0.6"/><circle cx="9.5" cy="7.7" r="0.65" fill="#5a1e00"/><circle cx="13.7" cy="7.7" r="0.65" fill="#5a1e00"/><circle cx="11.7" cy="11.1" r="0.5" fill="#3a1a00"/></g></g></g></g></svg><div class="ta" style="left:391.17px;top:441.48px;width:405.28px;height:134.61px"><div class="tx">text, watermark</div></div><div class="ta" style="left:392.88px;top:268.32px;width:402.85px;height:118.31px"><div class="tx">beautiful scenery nature glass bottle landscape, , purple galaxy bottle,</div></div>
<div id="topbar"></div><div id="topline"></div>
<div class="btn" id="bfold"><svg width="46" height="26" viewBox="0 0 46 26" style="position:absolute;left:0;top:0">
<path d="M9.8,8 Q9.8,6.2 11.6,6.2 H15 L17.2,8.6 H22.2 Q24,8.6 24,10.4 V16.6 Q24,18.4 22.2,18.4 H11.6 Q9.8,18.4 9.8,16.6 Z" fill="none" stroke="#1b1f2a" stroke-width="1.6" stroke-linejoin="round"/>
<polygon points="31.1,9.8 38,9.8 34.55,16.1" fill="#1b1f2a"/></svg></div>
<div class="btn" id="bmod">Models</div>
<div class="btn" id="bsave"><svg width="28" height="24" viewBox="0 0 28 24" style="position:absolute;left:0;top:0">
<path d="M9.3,8.1 Q9.3,7.3 10.1,7.3 H16.6 L18.8,9.5 V16.2 Q18.8,17 18,17 H10.1 Q9.3,17 9.3,16.2 Z" fill="none" stroke="#fff" stroke-width="1.3" stroke-linejoin="round"/>
<path d="M11.2,7.3 V9.4 H15.2 V7.3" fill="#888" stroke="#fff" stroke-width="1.1"/>
<ellipse cx="14" cy="13.5" rx="1.2" ry="1.5" fill="none" stroke="#fff" stroke-width="1"/></svg></div>
<svg width="1499" height="716" style="position:absolute;left:0;top:0;pointer-events:none">
<polygon points="45,33 64,35 62.3,38.2 95,62.4 94,64.2 58.2,45.4 55.1,48.7" fill="#fd3434" stroke="rgba(0,20,10,0.55)" stroke-width="0.8" stroke-linejoin="round"/></svg>

<div id="qp">
<svg width="177" height="96" style="position:absolute;left:0;top:0">
<g fill="#ddd"><rect x="10.8" y="11.8" width="2.6" height="1.3"/><rect x="15.6" y="11.8" width="2.6" height="1.3"/>
<rect x="10.8" y="16.8" width="2.6" height="1.3"/><rect x="15.6" y="16.8" width="2.6" height="1.3"/>
<rect x="10.8" y="21.9" width="2.6" height="1.3"/><rect x="15.6" y="21.9" width="2.6" height="1.3"/></g>
<g transform="translate(144.8,18.5)"><polygon points="0.00,-6.00 1.17,-5.88 1.80,-4.34 2.61,-3.91 4.24,-4.24 4.99,-3.33 4.34,-1.80 4.61,-0.92 6.00,0.00 5.88,1.17 4.34,1.80 3.91,2.61 4.24,4.24 3.33,4.99 1.80,4.34 0.92,4.61 0.00,6.00 -1.17,5.88 -1.80,4.34 -2.61,3.91 -4.24,4.24 -4.99,3.33 -4.34,1.80 -4.61,0.92 -6.00,0.00 -5.88,-1.17 -4.34,-1.80 -3.91,-2.61 -4.24,-4.24 -3.33,-4.99 -1.80,-4.34 -0.92,-4.61" fill="#eee" stroke="#000" stroke-width="0.9" stroke-linejoin="round"/><circle r="2.6" fill="none" stroke="#bbb" stroke-width="0.6"/><circle r="1.2" fill="#000"/></g>
<path d="M158.5,12.3 L167,20.6 M167,12.3 L158.5,20.6" stroke="#ddd" stroke-width="1.9"/>
</svg>
<div id="qs">Queue size: 0</div>
<div id="qbtn">Queue Prompt</div>
<div id="qbar">0%</div>
</div>
</body></html>
